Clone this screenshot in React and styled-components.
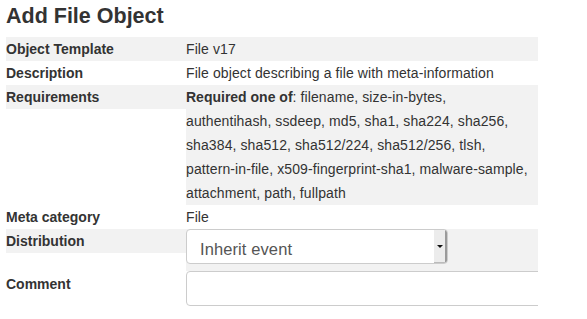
import React from 'react';
import styled, { createGlobalStyle } from 'styled-components';

const GlobalStyle = createGlobalStyle`
  body {
    margin: 0;
    background: #fff;
    font-family: "Liberation Sans", Arial, sans-serif;
    color: #333;
  }
`;

const Page = styled.div`
  padding: 0 0 0 6px;
  width: 532px;
  overflow: hidden;
`;

const Title = styled.h2`
  margin: 4px 0 9px;
  font-size: 21.5px;
  line-height: 24px;
  font-weight: bold;
  color: #333;
`;

const Table = styled.div`
  display: grid;
  grid-template-columns: 180px minmax(0, 1fr);
  align-items: start;
  font-size: 14px;
  line-height: 24px;
  letter-spacing: 0.1px;
`;

const Label = styled.div`
  font-weight: bold;
  height: 24px;
  line-height: 24px;
  letter-spacing: 0;
  background: ${p => (p.$shade ? '#f2f2f2' : 'transparent')};
`;

const Value = styled.div`
  min-height: 24px;
  background: ${p => (p.$shade ? '#f2f2f2' : 'transparent')};
`;

const Strong = styled.strong`
  font-weight: bold;
  letter-spacing: 0;
`;

const SelectBox = styled.div`
  display: flex;
  align-items: center;
  width: 262px;
  height: 35px;
  margin-bottom: 7px;
  box-sizing: border-box;
  border: 1px solid #ccc;
  border-radius: 4px;
  background: #fff;
  font-size: 16.5px;
  color: #555;
  overflow: hidden;
`;

const SelectText = styled.span`
  flex: 1;
  padding: 4px 0 0 13px;
`;

const SelectArrow = styled.span`
  position: relative;
  width: 11px;
  align-self: stretch;
  background: #ececec;
  border-right: 2px solid #9a9a9a;
  border-bottom: 1px solid #bbb;

  &::after {
    content: '';
    position: absolute;
    left: 3px;
    top: 15px;
    border-left: 3px solid transparent;
    border-right: 3px solid transparent;
    border-top: 3px solid #111;
  }
`;

const TextInput = styled.div`
  width: 400px;
  height: 35px;
  box-sizing: border-box;
  border: 1px solid #ccc;
  border-radius: 4px;
  background: #fff;
`;

const CommentLabel = styled(Label)`
  height: 35px;
  line-height: 27px;
`;

const requirements = [
  'filename, size-in-bytes,',
  'authentihash, ssdeep, md5, sha1, sha224, sha256,',
  'sha384, sha512, sha512/224, sha512/256, tlsh,',
  'pattern-in-file, x509-fingerprint-sha1, malware-sample,',
  'attachment, path, fullpath',
];

const App = () => {
  return (
    <>
      <GlobalStyle />
      <Page>
        <Title>Add File Object</Title>
        <Table>
          <Label $shade>Object Template</Label>
          <Value $shade>File v17</Value>

          <Label>Description</Label>
          <Value>File object describing a file with meta-information</Value>

          <Label $shade>Requirements</Label>
          <Value $shade>
            <Strong>Required one of</Strong>:{' '}
            {requirements.map((line, i) => (
              <React.Fragment key={i}>
                {i > 0 && <br />}
                {line}
              </React.Fragment>
            ))}
          </Value>

          <Label>Meta category</Label>
          <Value>File</Value>

          <Label $shade>Distribution</Label>
          <Value $shade>
            <SelectBox>
              <SelectText>Inherit event</SelectText>
              <SelectArrow />
            </SelectBox>
          </Value>

          <CommentLabel>Comment</CommentLabel>
          <Value>
            <TextInput />
          </Value>
        </Table>
      </Page>
    </>
  );
};

export default App;
